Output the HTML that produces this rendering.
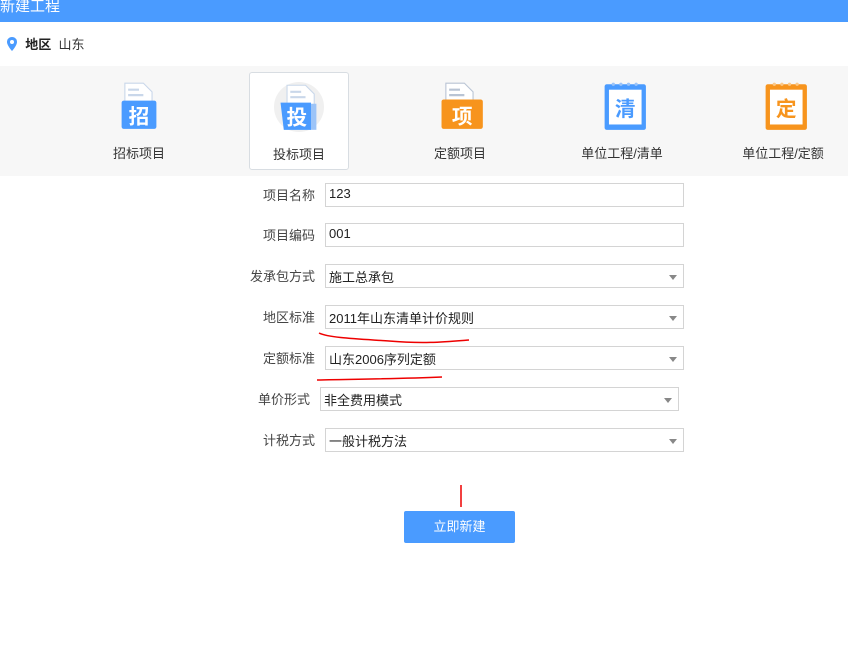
<!DOCTYPE html>
<html><head><meta charset="utf-8"><style>
*{margin:0;padding:0;box-sizing:border-box}
body{width:848px;height:658px;background:#fff;font-family:"Liberation Sans","Noto Sans CJK SC",sans-serif;font-size:13px;color:#333;position:relative;overflow:hidden}
.hd{position:absolute;left:0;top:0;width:848px;height:22px;background:#4a9bff;color:#fff;font-size:15px;line-height:14px;padding-left:0}
.loc{position:absolute;left:6px;top:37px;font-size:13px;line-height:16px}
.band{position:absolute;left:0;top:66px;width:848px;height:110px;background:#f7f7f7}
.card{position:absolute;top:72px;width:100px;height:98px;text-align:center}
.card.sel{background:#fff;border:1px solid #d8dde2;border-radius:3px}
.card .lb{position:absolute;left:-40px;right:-40px;top:71px;font-size:13px;color:#333}
.ic{position:absolute;top:9px;left:50%;margin-left:-25px;width:50px;height:50px}
.row{position:absolute;height:24px}
.row .l{position:absolute;right:calc(100% + 10px);top:2px;white-space:nowrap;font-size:13px;color:#444}
.row .b{position:absolute;inset:0;border:1px solid #d4d4d4;background:#fff;padding:2px 3px;font-size:13px;color:#222}
.arr{position:absolute;right:6px;top:10px;border-left:4px solid transparent;border-right:4px solid transparent;border-top:5px solid #888}
.btn{position:absolute;left:404px;top:511px;width:111px;height:32px;background:#4a9bff;border-radius:2px;color:#fff;text-align:center;line-height:32px;font-size:13px}
</style></head><body>
<div class="hd">新建工程</div>
<div class="loc"><svg width="12" height="14" viewBox="0 0 12 14" style="vertical-align:-2px"><path d="M6 0C3 0 1 2.2 1 5c0 3.5 5 9 5 9s5-5.5 5-9c0-2.8-2-5-5-5z" fill="#4a9bff"/><circle cx="6" cy="5" r="2" fill="#fff"/></svg>&nbsp; <b style="color:#222">地区</b>&nbsp; 山东</div>
<div class="band"></div>

<div class="card" style="left:89px"><svg class="ic" viewBox="0 0 44 46"><path d="M9 2h17l8 8v20H9z" fill="#fff" stroke="#c9d7ea"/><path d="M12 8h10M12 13h14" stroke="#c9d7ea" stroke-width="2"/><rect x="6" y="18" width="32" height="26" rx="2" fill="#4a9bff"/><text x="22" y="39" font-size="19" fill="#fff" text-anchor="middle" font-family="Noto Sans CJK SC" font-weight="bold">招</text></svg><div class="lb">招标项目</div></div>

<div class="card sel" style="left:249px"><svg class="ic" viewBox="0 0 44 46"><circle cx="22" cy="23" r="23" fill="#f0f0f0"/><path d="M11 3h17l8 8v20H11z" fill="#fff" stroke="#c9d7ea"/><path d="M14 9h10M14 14h14" stroke="#c9d7ea" stroke-width="2"/><rect x="32" y="20" width="6" height="24" fill="#9cc4f8"/><path d="M5 19h28v25H8z" fill="#4a9bff"/><text x="20" y="39" font-size="19" fill="#fff" text-anchor="middle" font-family="Noto Sans CJK SC" font-weight="bold">投</text></svg><div class="lb">投标项目</div></div>

<div class="card" style="left:410px"><svg class="ic" viewBox="0 0 44 46"><path d="M9 2h17l8 8v20H9z" fill="#fff" stroke="#b9c4d4"/><path d="M12 8h10M12 13h14" stroke="#b9c4d4" stroke-width="2"/><rect x="5" y="17" width="38" height="27" rx="2" fill="#f7941d"/><text x="24" y="39" font-size="19" fill="#fff" text-anchor="middle" font-family="Noto Sans CJK SC" font-weight="bold">项</text></svg><div class="lb">定额项目</div></div>

<div class="card" style="left:572px"><svg class="ic" viewBox="0 0 44 46"><rect x="6" y="3" width="38" height="42" rx="2" fill="#4a9bff"/><rect x="10" y="8" width="30" height="32" fill="#fff"/><circle cx="14" cy="3" r="1.5" fill="#9cc4f8"/><circle cx="21" cy="3" r="1.5" fill="#9cc4f8"/><circle cx="28" cy="3" r="1.5" fill="#9cc4f8"/><circle cx="35" cy="3" r="1.5" fill="#9cc4f8"/><text x="25" y="32" font-size="19" fill="#4a9bff" text-anchor="middle" font-family="Noto Sans CJK SC" font-weight="bold">清</text></svg><div class="lb">单位工程/清单</div></div>

<div class="card" style="left:733px"><svg class="ic" viewBox="0 0 44 46"><rect x="6" y="3" width="38" height="42" rx="2" fill="#f7941d"/><rect x="10" y="8" width="30" height="32" fill="#fff"/><circle cx="14" cy="3" r="1.5" fill="#fbc98a"/><circle cx="21" cy="3" r="1.5" fill="#fbc98a"/><circle cx="28" cy="3" r="1.5" fill="#fbc98a"/><circle cx="35" cy="3" r="1.5" fill="#fbc98a"/><text x="25" y="32" font-size="19" fill="#f7941d" text-anchor="middle" font-family="Noto Sans CJK SC" font-weight="bold">定</text></svg><div class="lb">单位工程/定额</div></div>

<div class="row" style="left:325px;top:183px;width:359px"><span class="l">项目名称</span><div class="b">123</div></div>
<div class="row" style="left:325px;top:223px;width:359px"><span class="l">项目编码</span><div class="b">001</div></div>
<div class="row" style="left:325px;top:264px;width:359px"><span class="l">发承包方式</span><div class="b">施工总承包<i class="arr"></i></div></div>
<div class="row" style="left:325px;top:305px;width:359px"><span class="l">地区标准</span><div class="b">2011年山东清单计价规则<i class="arr"></i></div></div>
<div class="row" style="left:325px;top:346px;width:359px"><span class="l">定额标准</span><div class="b">山东2006序列定额<i class="arr"></i></div></div>
<div class="row" style="left:320px;top:387px;width:359px"><span class="l">单价形式</span><div class="b">非全费用模式<i class="arr"></i></div></div>
<div class="row" style="left:325px;top:428px;width:359px"><span class="l">计税方式</span><div class="b">一般计税方法<i class="arr"></i></div></div>

<svg style="position:absolute;left:0;top:0" width="848" height="658"><g fill="none" stroke="#e00" stroke-width="1.5"><path d="M319 333c10 5 40 6 70 8 35 3 55 1 80-1"/><path d="M317 380c40-1 80-1 125-3"/><path d="M461 485v22"/></g></svg>

<div class="btn">立即新建</div>
</body></html>
